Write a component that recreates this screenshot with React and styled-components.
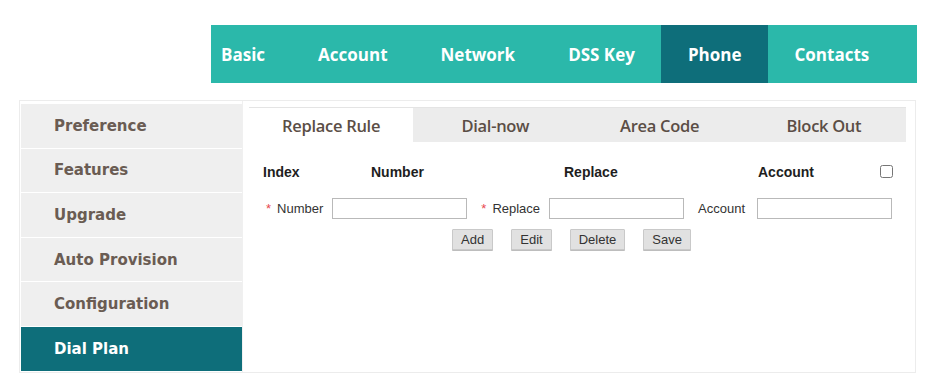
import React from "react";
import styled, { createGlobalStyle } from "styled-components";

const Global = createGlobalStyle`
  html, body { margin: 0; padding: 0; background: #fff; }
  body { font-family: "Liberation Sans", Arial, sans-serif; width: 930px; height: 391px; overflow: hidden; }
`;

const Page = styled.div`
  padding-top: 25px;
`;

const TopNav = styled.nav`
  margin-left: 211px;
  width: 706px;
  height: 58px;
  background: #2bb8aa;
  display: flex;
  align-items: stretch;
`;

const NavItem = styled.div`
  display: flex;
  align-items: center;
  padding: 0 26.5px 0 ${(p) => (p.$first ? "10px" : "26.5px")};
  font-family: "Open Sans", sans-serif;
  font-weight: 700;
  font-size: 17px;
  color: #fff;
  background: ${(p) => (p.$active ? "#0e6e7a" : "transparent")};
`;

const Frame = styled.div`
  margin: 17px 0 0 19px;
  width: 895px;
  height: 271px;
  border: 1px solid #ececec;
  display: flex;
`;

const Sidebar = styled.ul`
  list-style: none;
  margin: 0;
  padding: 3px 0 0 1px;
  width: 221px;
  border-right: 1px solid #f0f0f0;
  display: flex;
  flex-direction: column;
`;

const SideItem = styled.li`
  height: 43.6px;
  border-bottom: 1px solid #fff;
  display: flex;
  align-items: center;
  padding-left: 33px;
  font-family: "DejaVu Sans", sans-serif;
  font-weight: 700;
  font-size: 15px;
  color: ${(p) => (p.$active ? "#fff" : "#6a5c53")};
  background: ${(p) => (p.$active ? "#0e6e7a" : "#efefef")};
`;

const Content = styled.section`
  flex: 1;
  padding: 6px 9px 0 6px;
  display: flex;
  flex-direction: column;
`;

const Tabs = styled.div`
  display: grid;
  grid-template-columns: repeat(4, 1fr);
  height: 34px;
  background: #ececec;
  border-top: 1px solid #e4e4e4;
`;

const Tab = styled.div`
  display: flex;
  align-items: center;
  justify-content: center;
  font-family: "Open Sans", sans-serif;
  font-weight: 600;
  font-size: 16.5px;
  letter-spacing: -0.3px;
  color: #5b4e46;
  background: ${(p) => (p.$active ? "#fff" : "transparent")};
`;

const HeaderRow = styled.div`
  display: flex;
  align-items: center;
  height: 24px;
  margin-top: 18px;
  padding-left: 14px;
  font-size: 14px;
  font-weight: 700;
  color: #1e1e1e;
`;

const HeadCell = styled.div`
  width: ${(p) => p.$w}px;
`;

const Check = styled.input.attrs({ type: "checkbox" })`
  width: 13px;
  height: 13px;
  margin: 0;
  margin-top: -2px;
`;

const FormRow = styled.div`
  display: flex;
  align-items: center;
  height: 24px;
  margin-top: 12px;
  padding-left: 17px;
  font-size: 13px;
  color: #333;
`;

const Label = styled.label`
  display: flex;
  align-items: center;
  margin-left: ${(p) => p.$ml || 0}px;
  margin-right: ${(p) => p.$mr || 9}px;
`;

const Star = styled.span`
  color: #e8474f;
  margin-right: 6px;
`;

const Field = styled.input`
  box-sizing: border-box;
  width: 135px;
  height: 21px;
  border: 1px solid #b9b9b9;
  margin: 0;
  padding: 0 3px;
`;

const Buttons = styled.div`
  display: flex;
  justify-content: center;
  gap: 18px;
  margin-top: 9px;
  padding-right: 12px;
`;

const Button = styled.button`
  height: 21px;
  padding: 0 8px;
  font-family: "Liberation Sans", Arial, sans-serif;
  font-size: 13px;
  color: #333;
  background: #e1e1e1;
  border: 1px solid #c9c9c9;
  border-radius: 1px;
  box-shadow: 0 1px 0 #bdbdbd;
`;

const nav = ["Basic", "Account", "Network", "DSS Key", "Phone", "Contacts"];
const side = ["Preference", "Features", "Upgrade", "Auto Provision", "Configuration", "Dial Plan"];
const tabs = ["Replace Rule", "Dial-now", "Area Code", "Block Out"];

export default function App() {
  return (
    <Page>
      <Global />
      <TopNav>
        {nav.map((n, i) => (
          <NavItem key={n} $first={i === 0} $active={n === "Phone"}>
            {n}
          </NavItem>
        ))}
      </TopNav>
      <Frame>
        <Sidebar>
          {side.map((s) => (
            <SideItem key={s} $active={s === "Dial Plan"}>
              {s}
            </SideItem>
          ))}
        </Sidebar>
        <Content>
          <Tabs>
            {tabs.map((t, i) => (
              <Tab key={t} $active={i === 0}>
                {t}
              </Tab>
            ))}
          </Tabs>
          <HeaderRow>
            <HeadCell $w={108}>Index</HeadCell>
            <HeadCell $w={193}>Number</HeadCell>
            <HeadCell $w={194}>Replace</HeadCell>
            <HeadCell $w={122}>Account</HeadCell>
            <Check />
          </HeaderRow>
          <FormRow>
            <Label>
              <Star>*</Star>Number
            </Label>
            <Field />
            <Label $ml={14}>
              <Star>*</Star>Replace
            </Label>
            <Field />
            <Label $ml={14} $mr={12}>Account</Label>
            <Field />
          </FormRow>
          <Buttons>
            <Button>Add</Button>
            <Button>Edit</Button>
            <Button>Delete</Button>
            <Button>Save</Button>
          </Buttons>
        </Content>
      </Frame>
    </Page>
  );
}
